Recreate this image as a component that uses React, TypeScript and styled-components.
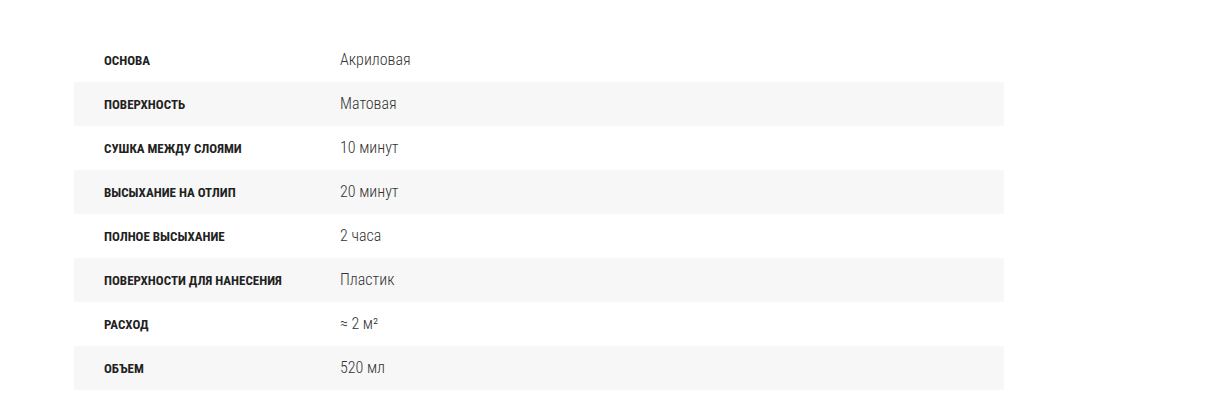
import styled, { createGlobalStyle } from 'styled-components'

const specs = [
  { name: 'Основа', value: 'Акриловая' },
  { name: 'Поверхность', value: 'Матовая' },
  { name: 'Сушка между слоями', value: '10 минут' },
  { name: 'Высыхание на отлип', value: '20 минут' },
  { name: 'Полное высыхание', value: '2 часа' },
  { name: 'Поверхности для нанесения', value: 'Пластик' },
  { name: 'Расход', value: '≈ 2 м²' },
  { name: 'Объем', value: '520 мл' },
]

function App() {
  return (
    <>
      <GlobalStyle />
      <Page>
        <Table>
          {specs.map((s, i) => (
            <Row key={s.name} $striped={i % 2 === 1}>
              <Name>{s.name}</Name>
              <Value>{s.value}</Value>
            </Row>
          ))}
        </Table>
      </Page>
    </>
  )
}

const GlobalStyle = createGlobalStyle`
  * { box-sizing: border-box; }
  body {
    margin: 0;
    background: #ffffff;
    font-family: "Roboto Condensed", Roboto, "Liberation Sans", sans-serif;
  }
`

const Page = styled.main`
  padding: 38px 0 0 74px;
`

const Table = styled.div`
  width: 930px;
  display: flex;
  flex-direction: column;
`

const Row = styled.div<{ $striped: boolean }>`
  height: 44px;
  display: grid;
  grid-template-columns: 266px 1fr;
  align-items: center;
  background: ${(p) => (p.$striped ? '#f7f7f7' : 'transparent')};
`

const Name = styled.div`
  padding-left: 30px;
  font-size: 13px;
  font-weight: 700;
  text-transform: uppercase;
  color: #222222;
`

const Value = styled.div`
  font-size: 16px;
  font-weight: 300;
  color: #333333;
  padding-bottom: 1px;
`

export default App
